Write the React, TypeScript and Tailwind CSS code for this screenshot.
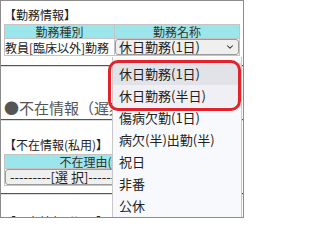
import { ChevronDown } from "lucide-react";

const options = [
  "休日勤務(1日)",
  "休日勤務(半日)",
  "傷病欠勤(1日)",
  "病欠(半)出勤(半)",
  "祝日",
  "非番",
  "公休",
];

function Rule({ className }: { className: string }) {
  return <div className={`h-[2px] border-t border-b border-t-[#555] border-b-[#dcdcdc] ${className}`} />;
}

export default function App() {
  return (
    <div
      className="relative w-[244px] h-[218px] overflow-hidden border border-[#8c8c8c] bg-white text-[12px] text-[#222]"
      style={{ fontFamily: '"Noto Sans CJK JP", "Noto Sans", sans-serif' }}
    >
      {/* 勤務情報 */}
      <div className="pl-[3px] pt-[5px] h-[22px] leading-[17px]">【勤務情報】</div>
      <table className="ml-[3px] mt-[1px] w-[236px] border-collapse table-fixed">
        <tbody>
          <tr className="bg-[#9be6eb] h-[14px] leading-[13px] text-[#333]">
            <td className="w-[110px] border border-[#c4c4c4] text-center">勤務種別</td>
            <td className="border border-[#c4c4c4] text-center">勤務名称</td>
          </tr>
          <tr className="h-[17px]">
            <td className="border border-[#c4c4c4] leading-[15px] whitespace-nowrap overflow-hidden">
              教員[臨床以外]勤務
            </td>
            <td className="border border-[#c4c4c4] p-0">
              <div className="flex items-center justify-between h-[16px] rounded-[3px] border border-[#9a9a9a] bg-[#efefef] pl-[3px] pr-[3px] text-[13px] leading-[14px]">
                <span>休日勤務(1日)</span>
                <ChevronDown size={10} strokeWidth={2.5} />
              </div>
            </td>
          </tr>
        </tbody>
      </table>
      <Rule className="mt-[9px]" />

      {/* 不在情報（遅刻） */}
      <div className="mt-[31px] pl-[3px] h-[20px] leading-[20px] text-[15px] text-[#555] whitespace-nowrap">
        ●不在情報（遅刻・早退）
      </div>
      <Rule className="mt-[1px]" />

      {/* 不在情報(私用) */}
      <div className="mt-[16px] pl-[3px] h-[16px] leading-[16px] whitespace-nowrap">【不在情報(私用)】</div>
      <table className="ml-[3px] mt-[1px] w-[236px] border-collapse table-fixed">
        <tbody>
          <tr className="bg-[#9be6eb] h-[14px] leading-[13px] text-[#333]">
            <td className="w-[190px] border border-[#c4c4c4] text-center whitespace-nowrap">不在理由(私用)</td>
            <td className="border border-[#c4c4c4]" />
          </tr>
          <tr className="h-[17px]">
            <td className="border border-[#c4c4c4] p-0">
              <div className="h-[16px] rounded-[3px] border border-[#9a9a9a] bg-[#efefef] pl-[4px] text-[13px] leading-[14px] whitespace-nowrap overflow-hidden">
                ---------[選 択]--------
              </div>
            </td>
            <td className="border border-[#c4c4c4]" />
          </tr>
        </tbody>
      </table>
      <Rule className="mt-[7px]" />
      <div className="mt-[19px] pl-[3px] leading-[16px] whitespace-nowrap">【不在情報(公用)】</div>

      {/* open select list */}
      <div className="absolute left-[111px] top-[56px] w-[130px] h-[170px] pt-[6px] bg-[#f8f9fc] border-l border-r border-[#c8c8c8] text-[13px]">
        {options.map((o, i) => (
          <div
            key={o}
            className={`h-[22px] pl-[6px] leading-[22px] whitespace-nowrap ${
              i === 0 ? "bg-[#e2e2e9]" : i === 1 ? "bg-[#f0f0f4]" : ""
            }`}
          >
            {o}
          </div>
        ))}
      </div>

      {/* highlight */}
      <div className="absolute left-[107px] top-[59px] w-[133px] h-[51px] rounded-[10px] border-[3px] border-[#e3232b]" />
    </div>
  );
}
